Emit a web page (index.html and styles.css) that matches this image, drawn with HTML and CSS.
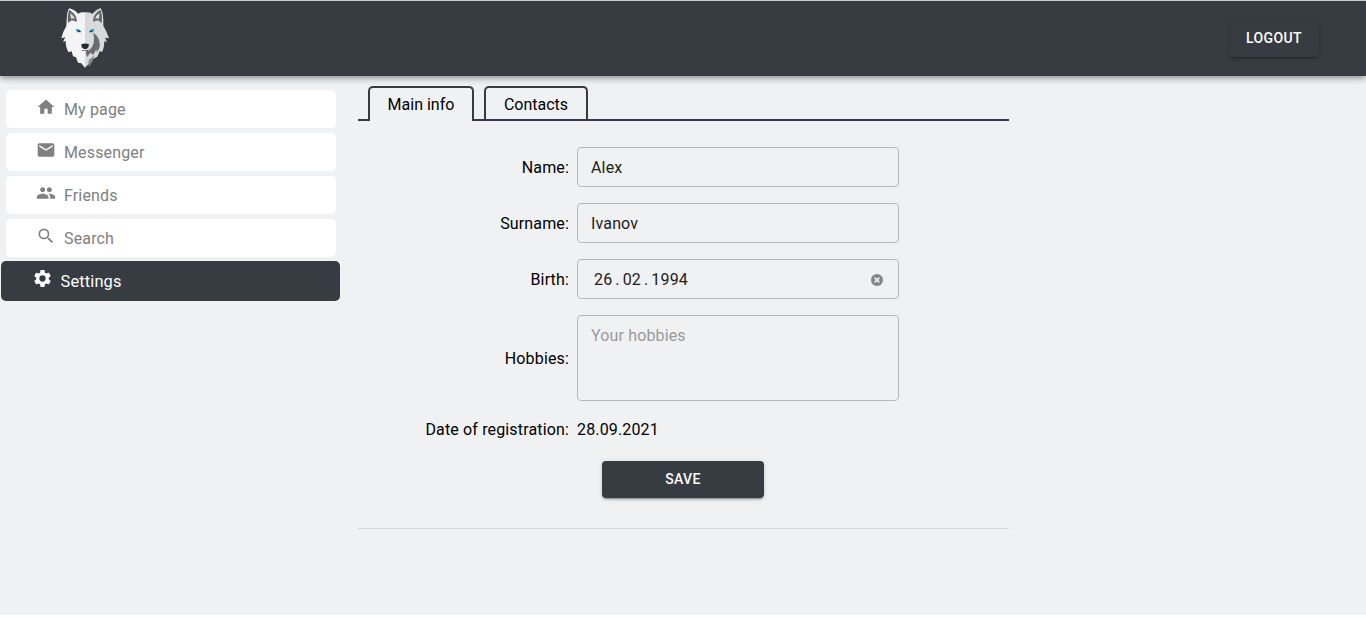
FILE: index.html
```html
<!DOCTYPE html>
<html lang="en">
<head>
<meta charset="utf-8">
<title>Settings</title>
<link rel="stylesheet" href="styles.css">
</head>
<body>
<div class="app">
  <header class="header">
    <svg class="logo" viewBox="30 18 150 189" aria-label="Wolf">
      <path fill="#f4f4f4" d="M57 25Q50 38 50 58L49 78Q38 96 34 115L46 112L39 125L47 123Q47 143 56 157L65 154L69 169L78 172L84 188L94 190L105 203V37Q93 36 84 41Q72 28 57 25Z"/>
      <path fill="#d8d9da" d="M105 37Q118 36 127 41Q138 28 152 24Q160 38 160 58V77Q170 94 177 115L165 113L171 126L163 124Q163 143 157 155L149 154L142 170L129 177L116 192L105 203Z"/>
      <path fill="#65666a" d="M58 29Q51 44 54 69L65 61L81 65Q82 44 58 29ZM151 29Q158 44 155 69L144 61L129 65Q128 43 151 29Z"/>
      <path fill="#dedfe0" d="M61 40Q61 50 64 57L69 55L75 58Q72 47 61 40ZM148 40Q149 50 146 57L141 55L135 58Q138 46 148 40Z"/>
      <path fill="#6c6c70" d="M130 98Q147 110 148 126L150 135Q149 147 140 157L139 148L130 164L121 158L111 172L107 155L118 150Q138 134 130 98Z"/>
      <path fill="#88898c" d="M126 178L119 200Q112 190 118 177ZM132 165L127 187L119 191L122 177Z"/>
      <path fill="#1688b8" d="M77 87L89 89L95 97L82 97ZM116 97L122 89L133 87L129 97Z"/>
      <path fill="#26282a" d="M85 92H89V96H85ZM121 92H125V96H121ZM94 133Q105 128 117 133L115 142L109 147H102L95 142ZM96 149Q106 154 115 149L113 153H98Z"/>
    </svg>
    <button class="button logout">LOGOUT</button>
  </header>
  <main class="content">
    <nav class="menu">
      <a class="item"><svg class="icon" viewBox="0 0 24 24"><path d="M10 20v-6h4v6h5v-8h3L12 3 2 12h3v8z"/></svg><span>My page</span></a>
      <a class="item"><svg class="icon" viewBox="0 0 24 24"><path d="M20 4H4c-1.100 0-2 .9-2 2v12c0 1.100.9 2 2 2h16c1.100 0 2-.9 2-2V6c0-1.100-.9-2-2-2zm0 4-8 5-8-5V6l8 5 8-5v2z"/></svg><span>Messenger</span></a>
      <a class="item"><svg class="icon" viewBox="0 0 24 24"><path d="M16 11c1.660 0 2.990-1.340 2.990-3S17.660 5 16 5s-3 1.340-3 3 1.340 3 3 3zm-8 0c1.660 0 2.990-1.340 2.990-3S9.660 5 8 5 5 6.340 5 8s1.340 3 3 3zm0 2c-2.330 0-7 1.170-7 3.500V19h14v-2.500c0-2.330-4.670-3.500-7-3.500zm8 0c-.29 0-.62.02-.97.05 1.160.84 1.970 1.970 1.970 3.450V19h6v-2.500c0-2.330-4.670-3.500-7-3.500z"/></svg><span>Friends</span></a>
      <a class="item"><svg class="icon" viewBox="0 0 24 24"><path d="M15.500 14h-.79l-.28-.27A6.470 6.470 0 0 0 16 9.500 6.500 6.500 0 1 0 9.500 16c1.610 0 3.090-.59 4.230-1.570l.27.28v.79l5 4.990L20.490 19zm-6 0a4.500 4.500 0 1 1 0-9 4.500 4.500 0 0 1 0 9z"/></svg><span>Search</span></a>
      <a class="item active"><svg class="icon" viewBox="0 0 24 24"><path d="M19.140 12.940c.04-.3.060-.61.060-.94 0-.32-.02-.64-.07-.94l2.030-1.580c.18-.14.230-.41.120-.61l-1.920-3.320c-.12-.22-.37-.29-.59-.22l-2.390.96c-.5-.38-1.030-.7-1.620-.94l-.36-2.540c-.04-.24-.24-.41-.48-.41h-3.840c-.24 0-.43.170-.47.410l-.36 2.540c-.59.240-1.130.570-1.620.940l-2.390-.96c-.22-.08-.47 0-.59.220L2.740 8.870c-.12.210-.08.470.12.610l2.030 1.580c-.05.300-.09.630-.09.940s.02.640.07.940l-2.030 1.580c-.18.140-.23.410-.12.610l1.920 3.320c.12.220.37.290.59.220l2.390-.96c.5.380 1.030.7 1.620.94l.36 2.540c.05.240.24.410.48.410h3.840c.24 0 .44-.17.470-.41l.36-2.540c.59-.24 1.130-.56 1.620-.94l2.390.96c.22.080.47 0 .59-.22l1.920-3.320c.12-.22.070-.47-.12-.61zM12 15.600A3.600 3.600 0 1 1 12 8.400a3.600 3.600 0 0 1 0 7.200z"/></svg><span>Settings</span></a>
    </nav>
    <section class="panel">
      <div class="tabs">
        <div class="tab selected">Main info</div>
        <div class="tab">Contacts</div>
      </div>
      <form class="form">
        <label for="name">Name:</label>
        <input class="field" id="name" value="Alex">
        <label for="surname">Surname:</label>
        <input class="field" id="surname" value="Ivanov">
        <span class="label">Birth:</span>
        <div class="field date">
          <span class="date-text"><span>26</span><span>.</span><span>02</span><span>.</span><span>1994</span></span>
          <svg class="clear" viewBox="0 0 12 12"><circle cx="6" cy="6" r="6" fill="#838486"/><path d="M3.600 3.600l4.800 4.800M8.400 3.600L3.600 8.400" stroke="#f0f1f3" stroke-width="1.500"/></svg>
        </div>
        <label for="hobbies">Hobbies:</label>
        <textarea class="field hobbies" id="hobbies" placeholder="Your hobbies"></textarea>
        <span class="label">Date of registration:</span>
        <span class="registered">28.09.2021</span>
      </form>
      <button class="button save">SAVE</button>
    </section>
  </main>
</div>
</body>
</html>
```

FILE: styles.css
```css
* { box-sizing: border-box; }
body {
  margin: 0;
  background: #fff;
  color: #000;
  font: 16px/20px Roboto, "Liberation Sans", sans-serif;
  overflow: hidden;
}
.app { height: 615px; background: #f0f1f3; }
.header {
  display: flex;
  align-items: flex-start;
  justify-content: space-between;
  height: 76px;
  padding: 5px 48px 0 60px;
  border-top: 1px solid #c6cbca;
  background: #373b42;
  box-shadow: 0 2px 4px -1px rgba(0,0,0,.2), 0 4px 5px rgba(0,0,0,.14), 0 1px 10px rgba(0,0,0,.12);
}
.logo { width: 50px; height: 63px; }
.button {
  border: 0;
  border-radius: 4px;
  background: #373b42;
  color: #fff;
  font: 500 14px/24.5px Roboto, "Liberation Sans", sans-serif;
  letter-spacing: .4px;
  box-shadow: 0 3px 1px -2px rgba(0,0,0,.2), 0 2px 2px rgba(0,0,0,.14), 0 1px 5px rgba(0,0,0,.12);
}
.logout { width: 88px; height: 37px; margin-top: 14px; padding: 0; }
.content { display: flex; gap: 22px; }
.menu {
  display: flex;
  flex-direction: column;
  gap: 5px;
  width: 336px;
  padding: 14px 0 0 6px;
  letter-spacing: .15px;
}
.item {
  display: flex;
  align-items: center;
  gap: 8px;
  height: 38px;
  padding-left: 30px;
  border-radius: 5px;
  background: #fff;
  color: #808080;
}
.item span { padding-top: 2px; }
.icon { width: 20px; height: 20px; margin-top: -4px; fill: currentColor; }
.active {
  height: 40px;
  margin: -1px -4px -1px -5px;
  padding-left: 31px;
  background: #373b42;
  color: #fff;
  font-size: 16.4px;
}
.active .icon { width: 21px; height: 21px; margin: -5px -.5px 0 0; }
.panel { width: 651px; height: 453px; padding-top: 10px; border-bottom: 1px solid #d3d4d6; }
.tabs {
  display: flex;
  gap: 10px;
  height: 35px;
  padding-left: 10px;
  border-bottom: 2px solid #373b42;
}
.tab {
  width: 104px;
  height: 33px;
  padding-top: 7px;
  border: 2px solid #373b42;
  border-bottom: 0;
  border-radius: 5px 5px 0 0;
  text-align: center;
}
.selected { width: 106px; height: 35px; background: #f0f1f3; }
.form {
  display: grid;
  grid-template-columns: 211px 322px;
  grid-template-rows: 40px 40px 40px 86px 24px;
  row-gap: 16px;
  column-gap: 8px;
  align-items: center;
  margin-top: 26px;
  letter-spacing: .15px;
}
.form label, .label { padding-top: 2px; text-align: right; }
.field {
  width: 322px;
  height: 40px;
  margin: 0;
  padding: 0 13px;
  border: 1px solid #b8b9bb;
  border-radius: 4px;
  background: transparent;
  color: #212121;
  font: inherit;
  letter-spacing: inherit;
  outline: 0;
}
.date { display: flex; align-items: center; justify-content: space-between; padding: 0 15px 0 16px; }
.date-text { display: flex; gap: 3px; padding-top: 2px; }
.clear { width: 12px; height: 12px; margin-top: 1px; }
.hobbies { height: 86px; padding-top: 10px; resize: none; }
.hobbies::placeholder { color: #9b9b9c; opacity: 1; }
.registered { padding-top: 2px; }
.save { display: block; width: 162px; height: 37px; margin: 20px 0 0 244px; padding: 0; }
```
